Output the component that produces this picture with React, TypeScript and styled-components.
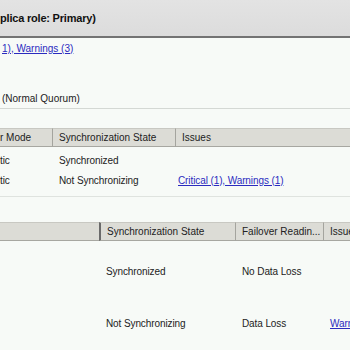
import React from "react";
import styled, { createGlobalStyle } from "styled-components";

const Global = createGlobalStyle`
  html, body {
    margin: 0;
    padding: 0;
    background: #f7faf7;
  }
  body {
    font-family: "Liberation Sans", Tahoma, sans-serif;
    font-size: 10px;
    color: #222;
  }
`;

const Page = styled.div`
  width: 350px;
  height: 350px;
  overflow: hidden;
  display: flex;
  flex-direction: column;
  background: #f7faf7;

  & > * {
    flex-shrink: 0;
  }
`;

const TitleBar = styled.div`
  height: 36px;
  display: flex;
  align-items: center;
  background: linear-gradient(#e3e3e3, #dcdcdc);
  border-bottom: 2px solid #737373;
  font-weight: bold;
  font-size: 11px;
  letter-spacing: -0.2px;
  color: #111;
`;

const Summary = styled.div`
  display: flex;
  flex-direction: column;
  padding-top: 3px;
  height: 67px;
  border-bottom: 1px solid #d4d8d4;
`;

const Line = styled.div<{ $top?: number }>`
  height: 14px;
  display: flex;
  align-items: center;
  margin-top: ${(p) => p.$top ?? 0}px;
  padding-left: 2px;
`;

const Link = styled.a`
  color: #2b2bbf;
  text-decoration: underline;
  cursor: pointer;
`;

const Table = styled.div<{ $cols: string }>`
  display: grid;
  grid-template-columns: ${(p) => p.$cols};
`;

const Head = styled.div<{ $strong?: boolean; $first?: boolean }>`
  height: 17px;
  display: flex;
  align-items: center;
  background: #dcdcd6;
  border-top: 1px solid #c8c8c2;
  border-bottom: 1px solid #a7a7a1;
  border-left: ${(p) =>
    p.$first ? "none" : p.$strong ? "2px solid #6a6a6a" : "1px solid #a4a49e"};
  padding-left: ${(p) => (p.$first ? 0 : 6)}px;
  white-space: nowrap;
  overflow: hidden;
`;

const Cell = styled.div<{ $h: number; $first?: boolean; $pad?: number; $left?: number }>`
  height: ${(p) => p.$h}px;
  box-sizing: border-box;
  padding-top: ${(p) => p.$pad ?? 0}px;
  display: flex;
  align-items: center;
  padding-left: ${(p) => p.$left ?? (p.$first ? 0 : 7)}px;
  white-space: nowrap;
  overflow: hidden;
  letter-spacing: -0.1px;
`;

const Section = styled.div<{ $top: number }>`
  margin-top: ${(p) => p.$top}px;
`;

const Divider = styled.div`
  height: 1px;
  background: #dfe3df;
  margin-top: 6px;
`;

export default function App() {
  return (
    <Page>
      <Global />
      <TitleBar>plica role: Primary)</TitleBar>
      <Summary>
        <Line>
          <Link>1), Warnings (3)</Link>
        </Line>
        <Line $top={36}>(Normal Quorum)</Line>
      </Summary>
      <Section $top={19}>
        <Table $cols="52px 123px 1fr">
          <Head $first>r Mode</Head>
          <Head>Synchronization State</Head>
          <Head>Issues</Head>
          <Cell $h={23} $pad={4} $first>tic</Cell>
          <Cell $h={23} $pad={4}>Synchronized</Cell>
          <Cell $h={23} $pad={4} />
          <Cell $h={20} $first>tic</Cell>
          <Cell $h={20}>Not Synchronizing</Cell>
          <Cell $h={20} $left={3}>
            <Link>Critical (1), Warnings (1)</Link>
          </Cell>
        </Table>
        <Divider />
      </Section>
      <Section $top={25}>
        <Table $cols="99px 136px 88px 1fr">
          <Head $first />
          <Head $strong>Synchronization State</Head>
          <Head>Failover Readin...</Head>
          <Head>Issue</Head>
          <Cell $h={52} $pad={8} $first />
          <Cell $h={52} $pad={8}>Synchronized</Cell>
          <Cell $h={52} $pad={8}>No Data Loss</Cell>
          <Cell $h={52} $pad={8} />
          <Cell $h={52} $pad={8} $first />
          <Cell $h={52} $pad={8}>Not Synchronizing</Cell>
          <Cell $h={52} $pad={8}>Data Loss</Cell>
          <Cell $h={52} $pad={8}>
            <Link>Warnings</Link>
          </Cell>
        </Table>
      </Section>
    </Page>
  );
}
